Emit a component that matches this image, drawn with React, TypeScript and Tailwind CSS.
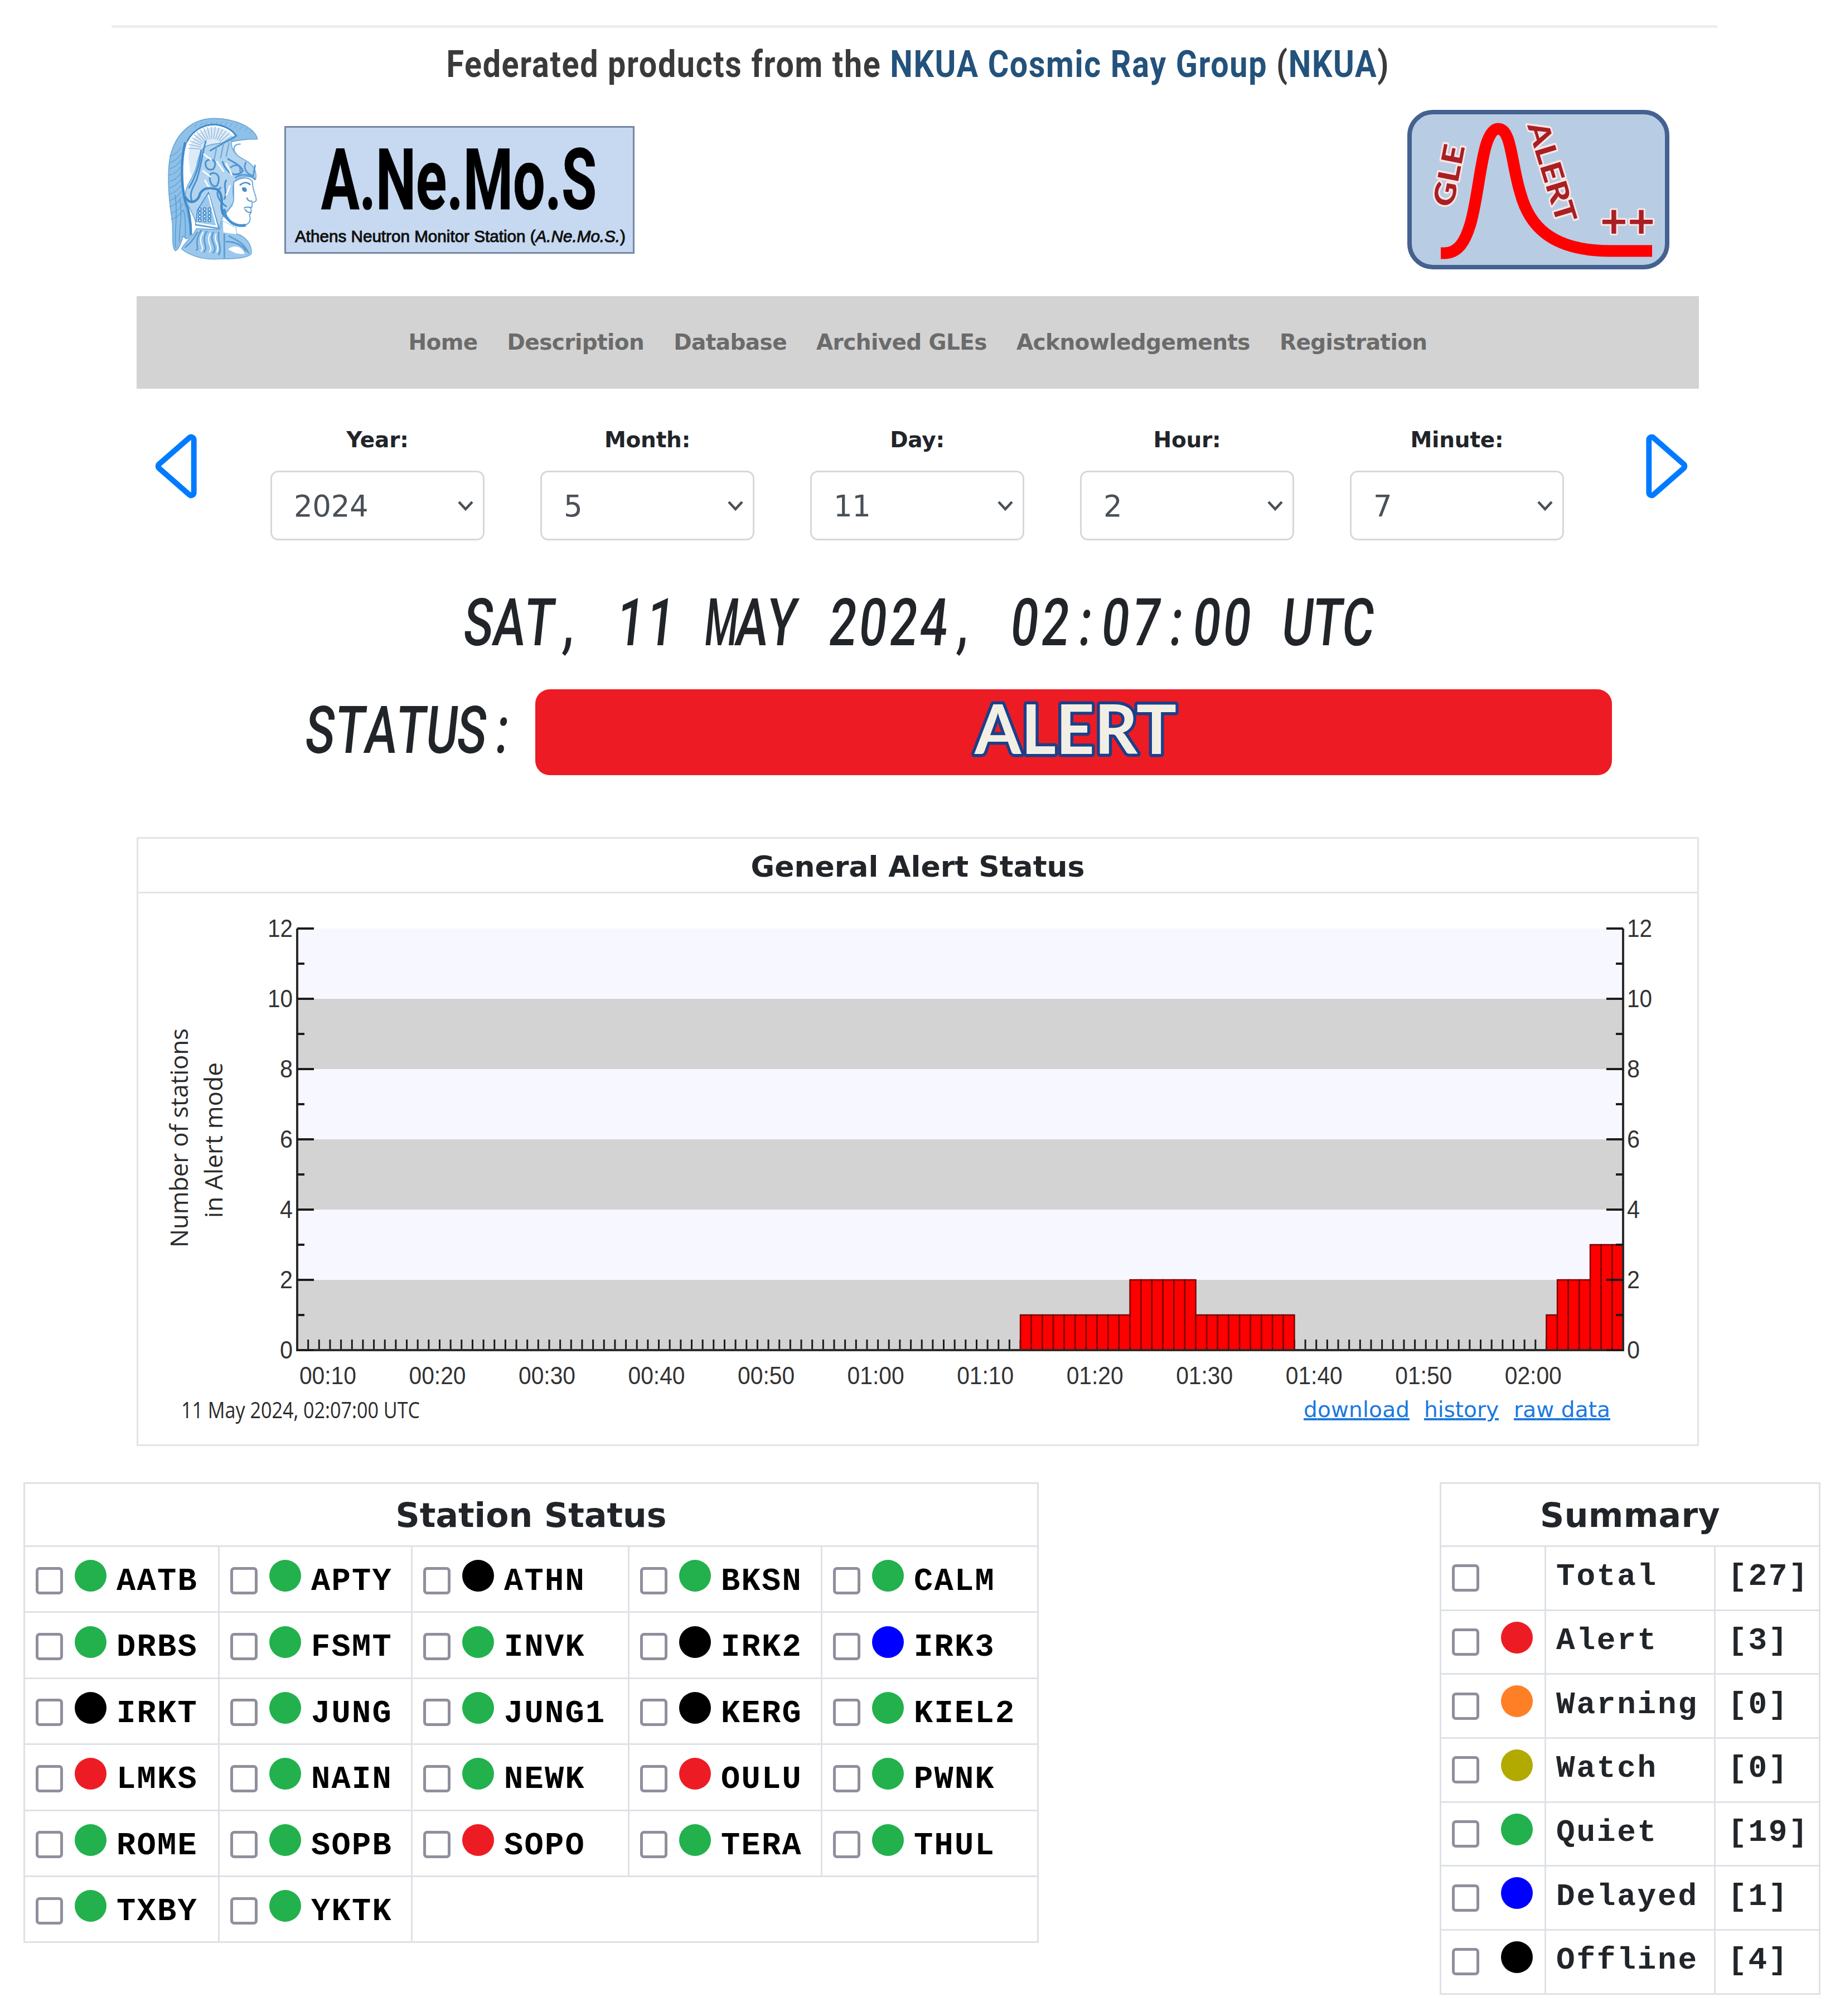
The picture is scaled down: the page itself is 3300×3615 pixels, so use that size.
import React, { useState } from 'react';
import { BsCaretLeft, BsCaretRight } from 'react-icons/bs';

type Status = 'alert' | 'warning' | 'watch' | 'quiet' | 'delayed' | 'offline';

const statusColors: Record<Status, string> = {
  alert: 'bg-[#ed1c24]',
  warning: 'bg-[#ff7f27]',
  watch: 'bg-[#b2aa00]',
  quiet: 'bg-[#22b14c]',
  delayed: 'bg-[#0000ff]',
  offline: 'bg-black',
};

const navLinks = ['Home', 'Description', 'Database', 'Archived GLEs', 'Acknowledgements', 'Registration'];

const dateFields = [
  { label: 'Year:', value: '2024' },
  { label: 'Month:', value: '5' },
  { label: 'Day:', value: '11' },
  { label: 'Hour:', value: '2' },
  { label: 'Minute:', value: '7' },
];

const stations: { name: string; status: Status }[][] = [
  [
    { name: 'AATB', status: 'quiet' },
    { name: 'APTY', status: 'quiet' },
    { name: 'ATHN', status: 'offline' },
    { name: 'BKSN', status: 'quiet' },
    { name: 'CALM', status: 'quiet' },
  ],
  [
    { name: 'DRBS', status: 'quiet' },
    { name: 'FSMT', status: 'quiet' },
    { name: 'INVK', status: 'quiet' },
    { name: 'IRK2', status: 'offline' },
    { name: 'IRK3', status: 'delayed' },
  ],
  [
    { name: 'IRKT', status: 'offline' },
    { name: 'JUNG', status: 'quiet' },
    { name: 'JUNG1', status: 'quiet' },
    { name: 'KERG', status: 'offline' },
    { name: 'KIEL2', status: 'quiet' },
  ],
  [
    { name: 'LMKS', status: 'alert' },
    { name: 'NAIN', status: 'quiet' },
    { name: 'NEWK', status: 'quiet' },
    { name: 'OULU', status: 'alert' },
    { name: 'PWNK', status: 'quiet' },
  ],
  [
    { name: 'ROME', status: 'quiet' },
    { name: 'SOPB', status: 'quiet' },
    { name: 'SOPO', status: 'alert' },
    { name: 'TERA', status: 'quiet' },
    { name: 'THUL', status: 'quiet' },
  ],
  [
    { name: 'TXBY', status: 'quiet' },
    { name: 'YKTK', status: 'quiet' },
  ],
];

const summary: { label: string; count: number; status?: Status }[] = [
  { label: 'Total', count: 27 },
  { label: 'Alert', count: 3, status: 'alert' },
  { label: 'Warning', count: 0, status: 'warning' },
  { label: 'Watch', count: 0, status: 'watch' },
  { label: 'Quiet', count: 19, status: 'quiet' },
  { label: 'Delayed', count: 1, status: 'delayed' },
  { label: 'Offline', count: 4, status: 'offline' },
];

// Athena head, drawn with strokes over a light blue base
const AthenaLogo: React.FC = () => {
  const hatch = Array.from({ length: 17 }, (_, i) => {
    const a = Math.PI * (1.02 + i * 0.052);
    return {
      x1: 275 + Math.cos(a) * 62,
      y1: 235 + Math.sin(a) * 60,
      x2: 275 + Math.cos(a) * 128,
      y2: 235 + Math.sin(a) * 122,
    };
  });
  return (
    <svg viewBox="0 0 600 870" className="h-[290px] w-[200px]" fill="none" strokeLinecap="round" strokeLinejoin="round">
      {/* crest */}
      <path
        d="M518 178 C505 120 400 65 280 67 C150 70 55 170 42 320 C34 430 45 520 60 620 C66 690 55 750 75 778 C90 780 105 745 118 700 C135 720 140 720 155 700 C165 640 130 560 118 480 C100 350 120 240 140 190 C170 130 230 100 290 100 C340 102 390 130 405 160 L370 195 C420 180 470 178 518 178 Z"
        fill="#8fc0e8"
        stroke="#6da6d8"
        strokeWidth="5"
      />
      <path d="M128 200 C105 300 108 430 130 510 C150 560 160 620 160 690" stroke="#3f8bcc" strokeWidth="13" />
      <path d="M140 190 C175 125 235 98 290 100 C340 104 385 130 402 160" stroke="#3d88c8" strokeWidth="8" />
      {Array.from({ length: 11 }, (_, i) => (
        <path key={i} d={`M${46 + (i > 8 ? 8 : 0)} ${270 + i * 34} q35 -8 62 -48`} stroke="#5fa2d8" strokeWidth="4" />
      ))}
      {Array.from({ length: 12 }, (_, i) => (
        <path key={i} d={`M${180 + i * 27} ${112 - Math.sin((i / 11) * 2.6) * 36 + i * 5} l14 -18`} stroke="#5fa2d8" strokeWidth="3" />
      ))}
      <path d="M75 480 C92 580 70 680 78 760 M100 500 C118 590 95 660 98 730 M120 560 C138 620 128 680 130 705" stroke="#5a9fd6" strokeWidth="5" />
      {/* helmet fan */}
      <path d="M150 300 C135 220 180 130 280 115 C330 112 370 140 390 165 L270 240 L215 260 L180 390 C150 370 155 330 150 300 Z" fill="#dcebf8" />
      {hatch.map((l, i) => (
        <line key={i} {...l} stroke="#8fb4d8" strokeWidth="4" />
      ))}
      {/* helmet body */}
      <path
        d="M215 240 C250 190 330 215 380 180 C370 230 400 265 440 285 C490 310 515 340 510 390 C480 380 440 370 400 400 C380 420 385 470 392 510 C370 560 340 570 330 600 L310 660 L190 640 C170 560 135 540 130 480 C130 420 190 370 195 300 Z"
        fill="#b3d4ef"
        stroke="#6fabdc"
        strokeWidth="5"
      />
      <path d="M405 160 L265 240 M240 190 C220 260 215 330 190 400 C170 440 150 470 165 510 M215 240 C205 330 175 400 150 440" stroke="#4a92d0" strokeWidth="9" />
      <path d="M300 215 L285 290 M335 205 L320 280 M365 200 L350 270 M425 205 C385 205 385 240 405 260" stroke="#6fabdc" strokeWidth="7" />
      <path
        d="M240 300 C270 270 310 300 280 340 C250 350 235 330 240 300 Z M265 365 C300 350 325 380 300 430 C270 440 255 400 265 365 Z M330 300 C350 360 400 390 440 350 C430 320 400 310 360 285 M350 400 C330 430 360 470 340 500 M320 440 C280 470 320 520 350 540"
        stroke="#4a92d0"
        strokeWidth="9"
      />
      <path d="M375 330 C395 315 430 310 425 350 M455 305 C440 335 460 365 490 375 M505 320 L495 380 M400 385 C440 360 480 370 505 395" stroke="#5a9bd4" strokeWidth="9" />
      <path d="M230 260 l40 30 M300 300 l35 50 M225 350 l40 30 M350 310 l30 60 M235 400 l30 50 M370 430 l-20 50" stroke="white" strokeWidth="8" />
      <path d="M130 490 C160 540 200 510 210 470 C230 440 250 440 290 445 C320 450 330 490 325 540 C325 570 335 590 350 600" stroke="#3f8bcc" strokeWidth="13" />
      {/* ear guard */}
      <path d="M255 465 L312 660 L185 640 L195 560 Z" fill="#9cc8eb" stroke="#4a92d0" strokeWidth="5" />
      <path d="M255 480 L300 648 L190 630" stroke="white" strokeWidth="8" />
      {[0, 1, 2, 3].map((r) =>
        [0, 1, 2].map((c) => <circle key={`${r}-${c}`} cx={208 + c * 26} cy={555 + r * 20} r="7" stroke="#3a86c8" strokeWidth="5" fill="white" />)
      )}
      {/* face */}
      <path
        d="M390 410 C430 380 480 380 492 410 C488 440 512 485 512 505 C510 520 492 515 488 522 C492 535 490 545 482 550 C488 565 485 580 475 585 C485 615 475 635 450 640 C400 650 360 620 340 590 C355 560 392 540 390 500 Z"
        fill="white"
        stroke="#6fabdc"
        strokeWidth="6"
      />
      <path d="M425 425 C445 408 465 410 478 422" stroke="#4a92d0" strokeWidth="8" />
      <path d="M435 440 C450 432 465 440 460 460 C445 465 435 460 435 440 Z" fill="#4a8fca" />
      <path d="M462 495 C465 510 480 515 488 512 M448 548 C460 540 475 545 484 548 M452 558 C465 575 478 575 482 570" stroke="#5c9fd6" strokeWidth="7" />
      <path d="M340 560 C345 620 400 650 450 642" stroke="#4a92d0" strokeWidth="15" />
      {/* neck and collar */}
      <path
        d="M190 660 C175 700 120 740 110 770 C170 815 250 830 330 822 C400 825 470 815 485 795 C490 740 450 700 405 688 L402 655 L330 620 L315 665 Z"
        fill="#9cc8eb"
        stroke="#6fabdc"
        strokeWidth="5"
      />
      <path d="M332 620 L402 655 L405 690 L335 680 Z" fill="white" />
      <path
        d="M215 670 C170 740 210 770 190 775 M245 675 C210 730 260 760 230 785 M280 680 C255 730 310 760 280 790 M310 680 C300 720 330 770 310 800 M340 690 V815 M365 700 C400 720 440 730 470 790 M350 730 C390 730 430 740 455 780 M130 760 C180 720 180 700 195 680"
        stroke="#5a9bd4"
        strokeWidth="8"
      />
      <path d="M360 770 C385 750 430 745 450 795 C420 800 390 790 360 770 Z" fill="white" />
      <path d="M225 680 C190 740 240 760 215 780 M265 685 C235 730 285 760 260 785 M295 690 C280 730 320 750 300 785" stroke="white" strokeWidth="6" />
    </svg>
  );
};

const AnemosLogo: React.FC = () => (
  <svg viewBox="0 0 628 229" className="h-[229px] w-[628px] overflow-visible">
    <rect x="1.5" y="1.5" width="625" height="226" fill="#c6d9f1" stroke="#7587a3" strokeWidth="3" />
    <text x="66" y="149" textLength="494" lengthAdjust="spacingAndGlyphs" fontFamily="Roboto" fontWeight="700" fontSize="153" fill="black" stroke="black" strokeWidth="1">
      A.Ne.Mo.S
    </text>
    <text x="19" y="208" textLength="593" lengthAdjust="spacingAndGlyphs" fontFamily="Liberation Sans" fontSize="29" fill="#111" stroke="#111" strokeWidth="1">
      Athens Neutron Monitor Station (<tspan fontStyle="italic">A.Ne.Mo.S.</tspan>)
    </text>
  </svg>
);

const GleLogo: React.FC = () => (
  <svg viewBox="0 0 470 286" className="h-[286px] w-[470px]">
    <rect x="4" y="4" width="462" height="278" rx="42" fill="#b8cce4" stroke="#44618f" strokeWidth="8" />
    <path
      d="M60 257 H66 C92 257 104 235 113 205 C131 145 133 34 163 34 C187 34 186 95 203 150 C218 205 255 253 365 253 H439"
      fill="none"
      stroke="#fe0000"
      strokeWidth="21"
    />
    <g fontFamily="Lato" fontWeight="900" fontSize="52" fill="#a81f24" stroke="#fbe6e4" strokeWidth="6" paintOrder="stroke" strokeLinejoin="round">
      <text transform="translate(82 176) rotate(-79)" textLength="112" lengthAdjust="spacingAndGlyphs">
        GLE
      </text>
      <text transform="translate(215 28) rotate(73)" textLength="186" lengthAdjust="spacingAndGlyphs">
        ALERT
      </text>
      <text x="346" y="229" fontSize="84" fontWeight="700" textLength="98">
        ++
      </text>
    </g>
  </svg>
);

// Every character takes the same cell, like on a segment display
const DisplayText: React.FC<{ text: string }> = ({ text }) => (
  <div className="flex whitespace-pre font-['Roboto'] text-[118px] font-medium leading-[120px] text-[#212529]">
    {text.split('').map((char, i) => (
      <span key={i} className="flex w-[54.4px] -skew-x-6 justify-center">
        <span className={char === 'M' ? 'scale-x-[0.58]' : 'scale-x-[0.74]'}>{char}</span>
      </span>
    ))}
  </div>
);

const Chart: React.FC = () => {
  const left = 285;
  const right = 2663;
  const top = 63;
  const bottom = 819;
  const minute = (right - left) / 121;
  const unit = (bottom - top) / 12;

  // minutes since 00:07 -> number of stations
  const bars: { at: number; n: number }[] = [];
  for (let m = 66; m < 91; m++) bars.push({ at: m, n: m >= 76 && m < 82 ? 2 : 1 });
  for (let m = 114; m < 121; m++) bars.push({ at: m, n: m === 114 ? 1 : m < 118 ? 2 : 3 });

  const timeLabels = ['00:10', '00:20', '00:30', '00:40', '00:50', '01:00', '01:10', '01:20', '01:30', '01:40', '01:50', '02:00'];

  return (
    <svg viewBox="0 0 2797 988" className="h-[988px] w-[2797px]" fontFamily="Liberation Sans">
      {[0, 1, 2, 3, 4, 5].map((i) => (
        <rect key={i} x={left} y={top + i * 2 * unit} width={right - left} height={2 * unit} fill={i % 2 ? '#d3d3d3' : '#f7f7ff'} />
      ))}
      {Array.from({ length: 121 }, (_, i) => (
        <line key={i} x1={left + i * minute} x2={left + i * minute} y1={bottom - 19} y2={bottom} stroke="#1c1c1c" strokeWidth="3" />
      ))}
      {bars.map((b) => (
        <rect
          key={b.at}
          x={left + b.at * minute}
          y={bottom - b.n * unit}
          width={minute}
          height={b.n * unit}
          fill="#ff0000"
          stroke="#7a0000"
          strokeWidth="2.5"
        />
      ))}
      <path d={`M${left} ${top} V${bottom} H${right} V${top}`} fill="none" stroke="#2b2b2b" strokeWidth="4" />
      {Array.from({ length: 13 }, (_, v) => {
        const y = bottom - v * unit;
        const len = v % 2 ? 13 : 30;
        return (
          <g key={v} stroke="#1c1c1c" strokeWidth="4">
            <line x1={left} x2={left + len} y1={y} y2={y} />
            <line x1={right - len} x2={right} y1={y} y2={y} />
          </g>
        );
      })}
      <g fontSize="44" fill="#333">
        {[0, 2, 4, 6, 8, 10, 12].map((v) => (
          <g key={v}>
            <text x={left - 8} y={bottom - v * unit + 15} textAnchor="end" textLength={v > 9 ? 45 : 23} lengthAdjust="spacingAndGlyphs">
              {v}
            </text>
            <text x={right + 7} y={bottom - v * unit + 15} textLength={v > 9 ? 45 : 23} lengthAdjust="spacingAndGlyphs">
              {v}
            </text>
          </g>
        ))}
        {timeLabels.map((t, i) => (
          <text key={t} x={left + (3 + i * 10) * minute - 4} y="880" textAnchor="middle" textLength="102" lengthAdjust="spacingAndGlyphs">
            {t}
          </text>
        ))}
      </g>
      <g fontFamily="Open Sans" fontSize="44" fill="#2b2b2b">
        <text transform="translate(89 635) rotate(-90)" textLength="393">
          Number of stations
        </text>
        <text transform="translate(151 582) rotate(-90)" textLength="279">
          in Alert mode
        </text>
        <text x="77" y="941" fontSize="41" textLength="428" lengthAdjust="spacingAndGlyphs">
          11 May 2024, 02:07:00 UTC
        </text>
      </g>
      <g fontFamily="DejaVu Sans" fontSize="39" fill="#1a78e0" textDecoration="underline">
        <text x="2090" y="939" textLength="190">
          download
        </text>
        <text x="2306" y="939" textLength="134">
          history
        </text>
        <text x="2467" y="939" textLength="173">
          raw data
        </text>
      </g>
    </svg>
  );
};

const Checkbox: React.FC<{ className?: string }> = ({ className = '' }) => (
  <input type="checkbox" className={`size-[49px] shrink-0 appearance-none rounded-[7px] border-[5px] border-[#8f8f9d] bg-white checked:bg-[#007bff] ${className}`} />
);

const App: React.FC = () => {
  const [date, setDate] = useState(dateFields.map((f) => f.value));

  return (
    <div className="flex h-[3615px] w-[3300px] flex-col overflow-hidden bg-white font-['DejaVu_Sans',sans-serif] text-[#212529]">
      <div className="mx-[200px] mt-[45px] h-[5px] w-[2880px] shrink-0 bg-[#ededed]" />

      <h1 className="mt-[15px] flex h-[100px] shrink-0 items-center justify-center whitespace-nowrap pr-[8px] font-['Roboto'] text-[66px] font-bold text-[#3a3a3a]">
        <span className="inline-block scale-x-[0.87] tracking-[1.9px]">
          Federated products from the <span className="text-[#23527c]">NKUA Cosmic Ray Group</span> (<span className="text-[#23527c]">NKUA</span>)
        </span>
      </h1>

      <header className="mt-[25px] flex h-[290px] shrink-0 items-start pl-[289px]">
        <AthenaLogo />
        <div className="ml-[21px] mt-[36px]">
          <AnemosLogo />
        </div>
        <div className="ml-[1386px] mt-[7px]">
          <GleLogo />
        </div>
      </header>

      <nav className="ml-[245px] mt-[51px] flex h-[166px] w-[2802px] shrink-0 items-center justify-center gap-[53px] bg-[#d3d3d3] text-[39px] font-bold tracking-[-0.6px] text-[#6b6b6b]">
        {navLinks.map((link) => (
          <a key={link} href="#">
            {link}
          </a>
        ))}
      </nav>

      <section className="mt-[60px] flex h-[212px] shrink-0 pl-[244px]">
        <BsCaretLeft className="size-[158px] text-[#007bff]" />
        <div className="ml-[83px] flex gap-[100px]">
          {dateFields.map((field, i) => (
            <div key={field.label} className="w-[384px]">
              <label className="block h-[87px] pt-[7px] text-center text-[39px] font-bold leading-[50px] tracking-[-0.2px]">{field.label}</label>
              <div className="flex h-[125px] items-center justify-between rounded-[14px] border-[3px] border-[#d5d8db] pl-[39px] pr-[15px] text-[53px] text-[#495057]">
                <input
                  value={date[i]}
                  onChange={(e) => setDate(date.map((d, j) => (j === i ? e.target.value : d)))}
                  className="w-[200px] bg-transparent pt-[3px] tracking-[-0.4px]"
                />
                <svg viewBox="0 0 32 22" className="h-[22px] w-[32px]" fill="none" stroke="#495057" strokeWidth="4.5">
                  <path d="M4 4 L16 17 L28 4" />
                </svg>
              </div>
            </div>
          ))}
        </div>
        <BsCaretRight className="ml-[98px] size-[158px] text-[#007bff]" />
      </section>

      <div className="mt-[88px] flex h-[120px] shrink-0 justify-center pr-[4px]">
        <DisplayText text="SAT, 11 MAY 2024, 02:07:00 UTC" />
      </div>

      <div className="mt-[59px] flex h-[154px] shrink-0 pl-[548px]">
        <div className="w-[412px] pt-[14px]">
          <DisplayText text="STATUS:" />
        </div>
        <div className="flex w-[1931px] items-center justify-center rounded-[26px] bg-[#ed1c24]">
          <svg viewBox="0 0 390 150" className="h-[150px] w-[390px] overflow-visible">
            <text
              x="17"
              y="114"
              textLength="362"
              lengthAdjust="spacingAndGlyphs"
              fontFamily="Lato"
              fontWeight="700"
              fontSize="122"
              fill="#f1efe4"
              stroke="#1b3f8b"
              strokeWidth="11"
              strokeLinejoin="round"
              paintOrder="stroke"
            >
              ALERT
            </text>
          </svg>
        </div>
      </div>

      <section className="ml-[245px] mt-[111px] h-[1092px] w-[2802px] shrink-0 border-[3px] border-[#e2e4e6]">
        <h2 className="flex h-[98px] items-center justify-center border-b-[3px] border-[#e2e4e6] pt-[4px] text-[52px] font-bold">General Alert Status</h2>
        <Chart />
      </section>

      <div className="mt-[65px] flex items-start justify-between pl-[42px] pr-[35px]">
        <table className="w-[1821px] table-fixed border-collapse border-[3px] border-[#dee2e6] [&_td]:border-[3px] [&_td]:border-[#dee2e6] [&_td]:p-0">
          <colgroup>
            <col className="w-[349px]" />
            <col className="w-[346px]" />
            <col className="w-[389px]" />
            <col className="w-[346px]" />
            <col className="w-[388px]" />
          </colgroup>
          <thead>
            <tr className="h-[113px]">
              <th colSpan={5} className="p-0 pt-[2px] text-[60px] font-bold">
                Station Status
              </th>
            </tr>
          </thead>
          <tbody>
            {stations.map((row, r) => (
              <tr key={r} className="h-[118.4px]">
                {row.map((station) => (
                  <td key={station.name}>
                    <div className="flex h-[115px] items-center pl-[19px]">
                      <Checkbox className="mt-[5px]" />
                      <span className={`mb-[12px] ml-[21px] size-[57px] shrink-0 rounded-full ${statusColors[station.status]}`} />
                      <span className="ml-[18px] mt-[10px] font-['Liberation_Mono',monospace] text-[57px] font-bold tracking-[2.3px] text-black">
                        {station.name}
                      </span>
                    </div>
                  </td>
                ))}
                {row.length < 5 && <td colSpan={5 - row.length} />}
              </tr>
            ))}
          </tbody>
        </table>

        <table className="w-[683px] table-fixed border-collapse border-[3px] border-[#dee2e6] [&_td]:border-[3px] [&_td]:border-[#dee2e6] [&_td]:p-0">
          <colgroup>
            <col className="w-[188px]" />
            <col className="w-[304px]" />
            <col className="w-[188px]" />
          </colgroup>
          <thead>
            <tr className="h-[113px]">
              <th colSpan={3} className="p-0 pt-[2px] text-[60px] font-bold tracking-[0.4px]">
                Summary
              </th>
            </tr>
          </thead>
          <tbody className="font-['Liberation_Mono',monospace] text-[56px] font-bold tracking-[2.8px]">
            {summary.map((row) => (
              <tr key={row.label} className="h-[114.7px]">
                <td>
                  <div className="flex h-[111px] items-center pl-[19px]">
                    <Checkbox />
                    {row.status && <span className={`mb-[17px] ml-[39px] size-[57px] rounded-full ${statusColors[row.status]}`} />}
                  </div>
                </td>
                <td>
                  <div className="pb-[5px] pl-[18px]">{row.label}</div>
                </td>
                <td>
                  <div className="pb-[5px] pl-[22px]">[{row.count}]</div>
                </td>
              </tr>
            ))}
          </tbody>
        </table>
      </div>
    </div>
  );
};

export default App;
